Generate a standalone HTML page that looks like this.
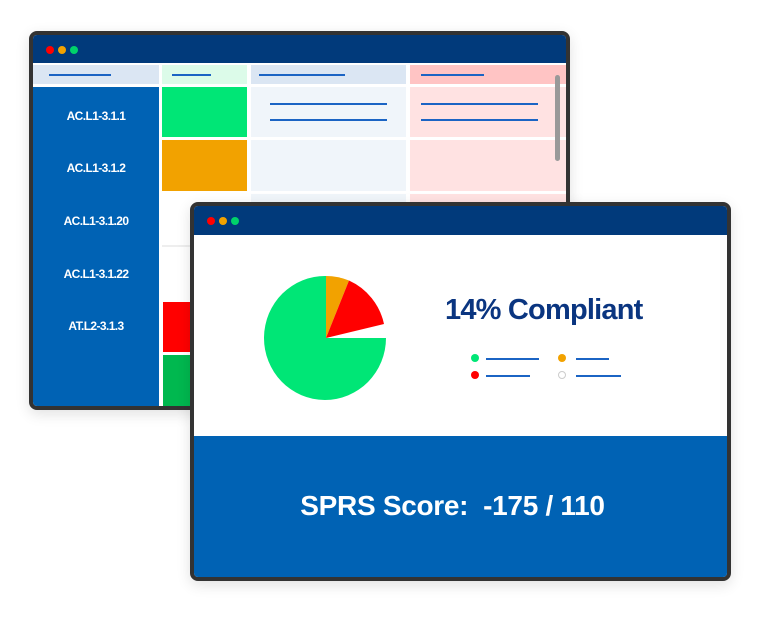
<!DOCTYPE html>
<html><head><meta charset="utf-8"><style>
*{margin:0;padding:0;box-sizing:border-box}
body{width:768px;height:617px;background:#fff;position:relative;overflow:hidden;font-family:"Liberation Sans",sans-serif}
.win{position:absolute;border:4px solid #333;border-radius:8px;overflow:hidden;box-shadow:0 4px 14px rgba(0,0,0,.12)}
.bar{position:absolute;left:0;right:0;top:0;background:#013a7b}
.dot{position:absolute;width:8px;height:8px;border-radius:50%}
.a{position:absolute}
.ln{position:absolute;height:2px;background:#1b64c4}
.lbl{position:absolute;left:0;width:126px;text-align:center;color:#fff;font-weight:bold;font-size:12px;letter-spacing:-.6px}
</style></head><body>
<div class="win" style="left:29px;top:31px;width:541px;height:379px;background:#fff">
 <div class="bar" style="height:28px"></div>
 <div class="dot" style="left:13px;top:11px;background:#f00"></div>
 <div class="dot" style="left:25px;top:11px;background:#f2a200"></div>
 <div class="dot" style="left:37px;top:11px;background:#00d26a"></div>
 <div class="a" style="left:0;top:30px;width:126px;height:19px;background:#dbe6f3"></div>
 <div class="a" style="left:129px;top:30px;width:85px;height:19px;background:#dcfbe9"></div>
 <div class="a" style="left:218px;top:30px;width:155px;height:19px;background:#dbe6f3"></div>
 <div class="a" style="left:377px;top:30px;width:160px;height:19px;background:#ffc4c4"></div>
 <div class="ln" style="left:16px;top:39px;width:62px"></div>
 <div class="ln" style="left:139px;top:39px;width:39px"></div>
 <div class="ln" style="left:226px;top:39px;width:86px"></div>
 <div class="ln" style="left:388px;top:39px;width:63px"></div>
 <div class="a" style="left:0;top:52px;width:126px;height:324px;background:#0062b4"></div>
 <div class="lbl" style="top:74px">AC.L1-3.1.1</div>
 <div class="lbl" style="top:126px">AC.L1-3.1.2</div>
 <div class="lbl" style="top:179px">AC.L1-3.1.20</div>
 <div class="lbl" style="top:232px">AC.L1-3.1.22</div>
 <div class="lbl" style="top:284px">AT.L2-3.1.3</div>
 <div class="a" style="left:129px;top:52px;width:85px;height:50px;background:#00e676"></div>
 <div class="a" style="left:129px;top:105px;width:85px;height:51px;background:#f2a200"></div>
 <div class="a" style="left:218px;top:52px;width:155px;height:50px;background:#f0f5fa"></div>
 <div class="a" style="left:218px;top:105px;width:155px;height:51px;background:#f0f5fa"></div>
 <div class="a" style="left:377px;top:52px;width:160px;height:50px;background:#ffe2e2"></div>
 <div class="a" style="left:377px;top:105px;width:160px;height:51px;background:#ffe2e2"></div>
 <div class="a" style="left:218px;top:159px;width:155px;height:14px;background:#f0f5fa"></div>
 <div class="a" style="left:377px;top:159px;width:160px;height:14px;background:#ffe2e2"></div>
 <div class="a" style="left:129px;top:210px;width:160px;height:2px;background:#eee"></div>
 <div class="ln" style="left:237px;top:68px;width:117px"></div>
 <div class="ln" style="left:237px;top:84px;width:117px"></div>
 <div class="ln" style="left:388px;top:68px;width:117px"></div>
 <div class="ln" style="left:388px;top:84px;width:117px"></div>
 <div class="a" style="left:130px;top:267px;width:40px;height:50px;background:#f00"></div>
 <div class="a" style="left:130px;top:320px;width:40px;height:56px;background:#00b84f"></div>
 <div class="a" style="left:522px;top:40px;width:5px;height:86px;border-radius:3px;background:#999"></div>
</div>

<div class="win" style="left:190px;top:202px;width:541px;height:379px;background:#fff">
 <div class="bar" style="height:29px"></div>
 <div class="dot" style="left:13px;top:11px;background:#f00"></div>
 <div class="dot" style="left:25px;top:11px;background:#f2a200"></div>
 <div class="dot" style="left:37px;top:11px;background:#00d26a"></div>
 <svg class="a" style="left:0;top:0" width="533" height="371">
  <g transform="translate(132,132)">
   <path d="M0 0 L0 -62 A62 62 0 0 1 23 -57.5 Z" fill="#f2a200"/>
   <path d="M0 0 L23 -57.5 A62 62 0 0 1 58 -14 Z" fill="#f00"/>
   <path d="M0 0 L60 0 A61 62 0 1 1 0 -62 Z" fill="#00e676"/>
  </g>
 </svg>
 <div class="a" style="left:251px;top:88px;font-size:29px;font-weight:bold;color:#0a3580;letter-spacing:-.8px">14% Compliant</div>
 <div class="dot" style="left:277px;top:148px;background:#00e676"></div>
 <div class="ln" style="left:292px;top:152px;width:53px"></div>
 <div class="dot" style="left:277px;top:165px;background:#f00"></div>
 <div class="ln" style="left:292px;top:169px;width:44px"></div>
 <div class="dot" style="left:364px;top:148px;background:#f2a200"></div>
 <div class="ln" style="left:382px;top:152px;width:33px"></div>
 <div class="dot" style="left:364px;top:165px;border:1.5px solid #ccc"></div>
 <div class="ln" style="left:382px;top:169px;width:45px"></div>
 <div class="a" style="left:0;top:230px;width:533px;height:141px;background:#0062b4"></div>
 <div class="a" style="left:-8px;top:284px;width:533px;text-align:center;color:#fff;font-size:28px;font-weight:bold;letter-spacing:-.3px">SPRS Score:&nbsp; -175 / 110</div>
</div>
</body></html>
